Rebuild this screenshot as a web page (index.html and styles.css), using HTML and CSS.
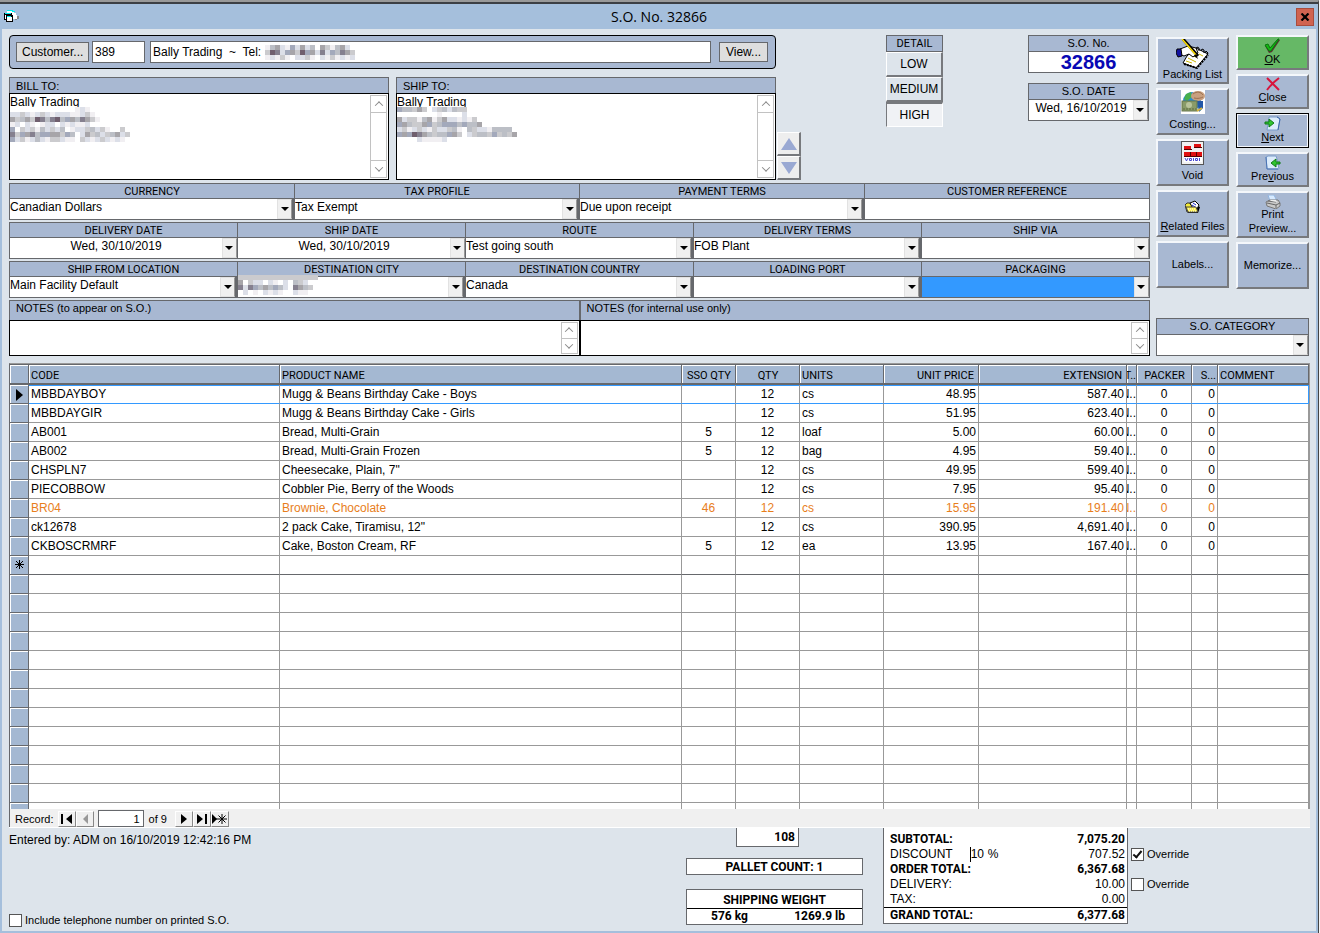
FILE: index.html
```html
<!DOCTYPE html>
<html lang="en">
<head>
<meta charset="utf-8">
<title>S.O. No. 32866</title>
<link rel="stylesheet" href="styles.css">
</head>
<body>
<div class="window">
  <header class="titlebar">
    <svg class="app-icon" width="16" height="14" viewBox="0 0 16 14" shape-rendering="crispEdges">
      <path d="M3 1h7v2h2v2h1v4h-4V5H5V3H3z" fill="#fff"/><path d="M3 0h6v1H3zM8 1h3v1H8z" fill="#0ee"/>
      <path d="M13 6h2v3h-2zM11 9h2v1h-2z" fill="#888"/>
      <path d="M0 3h8v7H0z" fill="#000"/><path d="M1 5h6v4H1z" fill="#fff"/>
      <path d="M2 5h7v7H2z" fill="#000"/><path d="M3 7h5v4H3z" fill="#fff"/><path d="M1 3h6v1H1zM3 6h4v1H3z" fill="#0ee"/>
    </svg>
    <h1>S.O. No. 32866</h1>
    <button class="close-window" aria-label="Close window">
      <svg width="10" height="8" viewBox="0 0 10 8"><path d="M1.500 0.500L8.500 7.500M8.500 0.500L1.500 7.500" stroke="#000" stroke-width="2.200"/></svg>
    </button>
  </header>

  <main class="content">
    <section class="top">
      <div class="form">
        <div class="row-head">
          <div class="parties">
            <div class="customer-bar">
              <button class="flat">Customer...</button>
              <input class="cust-no" aria-label="Customer number" value="389">
              <div class="cust-name">
                <input aria-label="Customer name" value="Bally Trading  ~  Tel:">
                <svg class="mosaic mosaic-tel" data-rows="145216252405314520|387265386527264753|121310223102131212"></svg>
              </div>
              <button class="flat">View...</button>
            </div>
            <div class="addresses">
              <div class="address">
                <label for="bill">BILL TO:</label>
                <div class="area">
                  <textarea id="bill">Bally Trading</textarea>
                  <div class="scroll"><button class="su" aria-label="Scroll up"></button><span></span><button class="sd" aria-label="Scroll down"></button></div>
                  <svg class="mosaic mosaic-addr" data-rows="0000000000000121|22321232122211231|5345387478465475310|12021012202121120000000|60323142324012234231003|736574665536402534234523|62312421332110321232121"></svg>
                </div>
              </div>
              <div class="address">
                <label for="ship">SHIP TO:</label>
                <div class="area">
                  <textarea id="ship">Bally Trading</textarea>
                  <div class="scroll"><button class="su" aria-label="Scroll up"></button><span></span><button class="sd" aria-label="Scroll down"></button></div>
                  <svg class="mosaic mosaic-addr" data-rows="64435302342433|0000000010000200|523314513522121300|654335634666464450|23123213223410432214444|656875434465302344363435|00002111120000000000000"></svg>
                </div>
              </div>
              <div class="movers">
                <button aria-label="Previous address"><svg width="18" height="12" viewBox="0 0 18 12"><path d="M9 0l8 12H1z" fill="#9aa9d3"/></svg></button>
                <button aria-label="Next address"><svg width="18" height="12" viewBox="0 0 18 12"><path d="M9 12l8-12H1z" fill="#9aa9d3"/></svg></button>
              </div>
            </div>
          </div>
          <div class="detail">
            <div class="cap narrow">DETAIL</div>
            <button>LOW</button>
            <button>MEDIUM</button>
            <button class="pressed">HIGH</button>
          </div>
          <div class="order-id">
            <div class="box">
              <label class="cap" for="so-no">S.O. No.</label>
              <input id="so-no" class="so-no" value="32866">
            </div>
            <div class="box">
              <label class="cap" for="so-date">S.O. DATE</label>
              <div class="combo date"><select id="so-date"><option>Wed, 16/10/2019</option></select></div>
            </div>
          </div>
        </div>

        <div class="fields four">
          <div class="field"><label for="f1">CURRENCY</label><div class="combo"><select id="f1"><option>Canadian Dollars</option></select></div></div>
          <div class="field"><label for="f2">TAX PROFILE</label><div class="combo"><select id="f2"><option>Tax Exempt</option></select></div></div>
          <div class="field"><label for="f3">PAYMENT TERMS</label><div class="combo"><select id="f3"><option>Due upon receipt</option></select></div></div>
          <div class="field"><label for="f4">CUSTOMER REFERENCE</label><input id="f4"></div>
        </div>
        <div class="fields five">
          <div class="field"><label for="g1">DELIVERY DATE</label><div class="combo date"><select id="g1"><option>Wed, 30/10/2019</option></select></div></div>
          <div class="field"><label for="g2">SHIP DATE</label><div class="combo date"><select id="g2"><option>Wed, 30/10/2019</option></select></div></div>
          <div class="field"><label for="g3">ROUTE</label><div class="combo"><select id="g3"><option>Test going south</option></select></div></div>
          <div class="field"><label for="g4">DELIVERY TERMS</label><div class="combo"><select id="g4"><option>FOB Plant</option></select></div></div>
          <div class="field"><label for="g5">SHIP VIA</label><div class="combo date"><select id="g5"><option></option></select></div></div>
        </div>
        <div class="fields five">
          <div class="field"><label for="h1">SHIP FROM LOCATION</label><div class="combo"><select id="h1"><option>Main Facility Default</option></select></div></div>
          <div class="field"><label for="h2">DESTINATION CITY</label><div class="combo"><select id="h2"><option></option></select><svg class="mosaic mosaic-city" data-rows="3333333333333333|5032202102043200|7276454642075430|0201021210021100"></svg></div></div>
          <div class="field"><label for="h3">DESTINATION COUNTRY</label><div class="combo"><select id="h3"><option>Canada</option></select></div></div>
          <div class="field"><label for="h4">LOADING PORT</label><div class="combo"><select id="h4"><option></option></select></div></div>
          <div class="field"><label for="h5">PACKAGING</label><div class="combo date active"><select id="h5"><option></option></select></div></div>
        </div>
        <div class="notes">
          <div class="note">
            <label for="n1">NOTES (to appear on S.O.)</label>
            <div class="area"><textarea id="n1"></textarea><div class="scroll"><button class="su" aria-label="Scroll up"></button><button class="sd" aria-label="Scroll down"></button></div></div>
          </div>
          <div class="note">
            <label for="n2">NOTES (for internal use only)</label>
            <div class="area"><textarea id="n2"></textarea><div class="scroll"><button class="su" aria-label="Scroll up"></button><button class="sd" aria-label="Scroll down"></button></div></div>
          </div>
        </div>
      </div>

      <aside class="side">
        <div class="actions">
          <div class="col docs">
            <button class="act tall">
              <svg width="34" height="30" viewBox="0 0 34 30">
                <path d="M11 17l9-8 12 6-12 14-13-5z" fill="#fff" stroke="#000"/>
                <path d="M8 25l13 4 11-13" fill="none" stroke="#000" stroke-width="2" stroke-dasharray="2 1"/>
                <path d="M12 19l8 4M15 16l5 2M10 22l6 2M23 15l4 2" stroke="#c8b400"/>
                <path d="M20 10l1-2 2 1v3M25 12l1-2 2 1v3M29 14l1-2 2 2-1 2" fill="none" stroke="#000"/>
                <path d="M4 10l8-3 8 2 2 5-5 4-4-3-5 2-5-2z" fill="#fff" stroke="#000"/>
                <path d="M1 10h4l1 7-4 1-2-4z" fill="#1010a0" stroke="#000"/>
                <path d="M7 0l15 17" stroke="#000" stroke-width="3"/><path d="M6 0l14 16" stroke="#ffe000" stroke-width="1.500"/>
                <path d="M20 15l2 5-4-3z" fill="#000"/>
              </svg>
              <span>Packing List</span>
            </button>
            <button class="act tall">
              <svg width="24" height="24" viewBox="0 0 24 24">
                <rect width="24" height="24" fill="#fff"/><circle cx="11" cy="11" r="9" fill="#2a8bd0"/>
                <path d="M5 4l5-2 1 5-5 4-3-2zM17 14l4-2 1 5-3 4z" fill="#48b04c"/><path d="M16 11h6v7l-4 4z" fill="#2358a8"/>
                <ellipse cx="17" cy="6" rx="7" ry="5" fill="#c9a080"/><path d="M12 4c4-3 8-2 10 1M13 8c4 1 7 0 9-1" stroke="#9c7150" fill="none"/>
                <rect x="1" y="11" width="15" height="10" fill="#899b68" stroke="#66764c"/><circle cx="8" cy="15" r="3" fill="#b9c49b"/>
                <path d="M2 19h13" stroke="#5c693f" stroke-dasharray="2 1"/><path d="M16 21l5-3" stroke="#d6b33c" stroke-width="2"/>
              </svg>
              <span>Costing...</span>
            </button>
            <button class="act tall">
              <svg width="24" height="24" viewBox="0 0 24 24">
                <rect width="23" height="24" fill="#555"/><rect x="1" y="1" width="21" height="22" fill="#f1f1f1"/>
                <path d="M3 5h7v3H3zM13 3h7v3h-7zM3 11h18v4H3z" fill="#e01010"/><path d="M3 8.500h8M13 6.500h8M3 15.500h18M9.500 11v4M15.500 11v4" stroke="#500"/>
                <rect x="3" y="16" width="18" height="5" fill="#fff"/>
                <path d="M4 17l1.500 3L7 17M8.500 17.500h2v2h-2zM12.500 17v3M14.500 17.500h2v2h-2zM18.500 17v3" fill="none" stroke="#4848d0"/>
              </svg>
              <span>Void</span>
            </button>
            <button class="act tall">
              <svg width="16" height="15" viewBox="0 0 16 15">
                <path d="M1 6h12l2 1-2 6H3z" fill="#000"/><path d="M0 5l2-2h3l1 2h6v7H2z" fill="#f4ec3a" stroke="#333"/>
                <path d="M5 3l5-2 4 4-2 4-5-2z" fill="#fff" stroke="#000"/><path d="M8 3l3 2M7 5l3 2" stroke="#1525cc"/>
                <path d="M1 7h10l2 5H3z" fill="#fff14a" stroke="#444"/><path d="M3 9h8M4 11h7" stroke="#fff" stroke-dasharray="1 1"/>
              </svg>
              <span><u>R</u>elated Files</span>
            </button>
            <button class="act tall"><span>Labels...</span></button>
          </div>
          <div class="col">
            <button class="act ok">
              <svg width="17" height="15" viewBox="0 0 17 15"><path d="M1 8l3-1 2 3 8-9 2 1-8 12-3 1z" fill="#5b3030"/><path d="M1 7l3-1 2 4 8-9 1 0-8 12H5z" fill="#12b812" stroke="#08780e"/></svg>
              <span><u>O</u>K</span>
            </button>
            <button class="act">
              <svg width="14" height="14" viewBox="0 0 14 14"><path d="M1 1l12 12M13 1C9 4 4 9 1 13" stroke="#d8143c" stroke-width="2" fill="none"/></svg>
              <span><u>C</u>lose</span>
            </button>
            <button class="act default">
              <svg width="17" height="15" viewBox="0 0 17 15"><path d="M5 1h9l2 2-2 11H3l1-6z" fill="#dcecfb" stroke="#7a9ccb"/><path d="M13 1l3 2-2 11" fill="none" stroke="#3c66aa"/><path d="M1 6h4V3l5 4-5 4V8H1z" fill="#2fc42f" stroke="#117a18"/></svg>
              <span><u>N</u>ext</span>
            </button>
            <button class="act">
              <svg width="17" height="15" viewBox="0 0 17 15"><path d="M2 2l2-1h8l1 3 2 10H3z" fill="#dcecfb" stroke="#7a9ccb"/><path d="M2 2l1 12h11" fill="none" stroke="#4a73b4"/><path d="M16 7h-4V4L7 8l5 4V9h4z" fill="#2fc42f" stroke="#117a18"/></svg>
              <span>Pre<u>v</u>ious</span>
            </button>
            <button class="act tall print">
              <svg width="16" height="14" viewBox="0 0 16 14"><path d="M3 0h6l3 6H5z" fill="#d7eaff" stroke="#90b4e0"/><path d="M1 7l4-2h8l2 3v3l-4 3-9-3z" fill="#c9c9c9" stroke="#777"/><path d="M2 8l9 2 4-2M11 10v3M3 6l8 1" stroke="#666" fill="none"/><path d="M5 5h6l1 2-6-1z" fill="#eee"/></svg>
              <span>Print<br>Preview...</span>
            </button>
            <button class="act tall"><span>Memorize...</span></button>
          </div>
        </div>
        <div class="box category">
          <label class="cap" for="cat">S.O. CATEGORY</label>
          <div class="combo date"><select id="cat"><option></option></select></div>
        </div>
      </aside>
    </section>

    <section class="grid">
      <div class="sheet">
        <table>
          <colgroup><col class="w-sel"><col class="w-code"><col><col class="w-sso"><col class="w-qty"><col class="w-units"><col class="w-price"><col class="w-ext"><col class="w-t"><col class="w-packer"><col class="w-s"><col class="w-comment"></colgroup>
          <thead>
            <tr><th></th><th>CODE</th><th>PRODUCT NAME</th><th class="c">SSO QTY</th><th class="c">QTY</th><th>UNITS</th><th class="r">UNIT PRICE</th><th class="r">EXTENSION</th><th class="t"><span>T..</span></th><th class="c">PACKER</th><th class="s">S...</th><th>COMMENT</th></tr>
          </thead>
          <tbody id="lines">
            <tr class="current"><th><svg width="7" height="12" viewBox="0 0 7 12"><path d="M0 0l7 6-7 6z"/></svg></th><td>MBBDAYBOY</td><td>Mugg &amp; Beans Birthday Cake - Boys</td><td class="c"></td><td class="c">12</td><td>cs</td><td class="r">48.95</td><td class="r">587.40</td><td class="t"><span>N..</span></td><td class="c">0</td><td class="r">0</td><td></td></tr>
            <tr><th></th><td>MBBDAYGIR</td><td>Mugg &amp; Beans Birthday Cake - Girls</td><td class="c"></td><td class="c">12</td><td>cs</td><td class="r">51.95</td><td class="r">623.40</td><td class="t"><span>N..</span></td><td class="c">0</td><td class="r">0</td><td></td></tr>
            <tr><th></th><td>AB001</td><td>Bread, Multi-Grain</td><td class="c">5</td><td class="c">12</td><td>loaf</td><td class="r">5.00</td><td class="r">60.00</td><td class="t"><span>N..</span></td><td class="c">0</td><td class="r">0</td><td></td></tr>
            <tr><th></th><td>AB002</td><td>Bread, Multi-Grain Frozen</td><td class="c">5</td><td class="c">12</td><td>bag</td><td class="r">4.95</td><td class="r">59.40</td><td class="t"><span>N..</span></td><td class="c">0</td><td class="r">0</td><td></td></tr>
            <tr><th></th><td>CHSPLN7</td><td>Cheesecake, Plain, 7"</td><td class="c"></td><td class="c">12</td><td>cs</td><td class="r">49.95</td><td class="r">599.40</td><td class="t"><span>N..</span></td><td class="c">0</td><td class="r">0</td><td></td></tr>
            <tr><th></th><td>PIECOBBOW</td><td>Cobbler Pie, Berry of the Woods</td><td class="c"></td><td class="c">12</td><td>cs</td><td class="r">7.95</td><td class="r">95.40</td><td class="t"><span>N..</span></td><td class="c">0</td><td class="r">0</td><td></td></tr>
            <tr class="flag"><th></th><td>BR04</td><td>Brownie, Chocolate</td><td class="c">46</td><td class="c">12</td><td>cs</td><td class="r">15.95</td><td class="r">191.40</td><td class="t"><span>N..</span></td><td class="c">0</td><td class="r">0</td><td></td></tr>
            <tr><th></th><td>ck12678</td><td>2 pack Cake, Tiramisu, 12"</td><td class="c"></td><td class="c">12</td><td>cs</td><td class="r">390.95</td><td class="r">4,691.40</td><td class="t"><span>N..</span></td><td class="c">0</td><td class="r">0</td><td></td></tr>
            <tr><th></th><td>CKBOSCRMRF</td><td>Cake, Boston Cream, RF</td><td class="c">5</td><td class="c">12</td><td>ea</td><td class="r">13.95</td><td class="r">167.40</td><td class="t"><span>N..</span></td><td class="c">0</td><td class="r">0</td><td></td></tr>
            <tr class="new"><th><svg width="9" height="9" viewBox="0 0 9 9"><path d="M4.500 0v9M0 4.500h9M1 1l7 7M8 1L1 8" stroke="#000"/></svg></th><td></td><td></td><td></td><td></td><td></td><td></td><td></td><td></td><td></td><td></td><td></td></tr>
          </tbody>
        </table>
      </div>
      <nav class="records">
        <label for="rec">Record:</label>
        <div class="navs">
          <button aria-label="First"><svg width="12" height="10" viewBox="0 0 12 10"><path d="M0 0h2v10H0zM11 0v10L5 5z"/></svg></button>
          <button aria-label="Previous record"><svg width="12" height="10" viewBox="0 0 12 10"><path d="M9 0v10L4 5z" fill="#999"/></svg></button>
        </div>
        <input id="rec" value="1">
        <span>of 9</span>
        <div class="navs next">
          <button aria-label="Next record"><svg width="12" height="10" viewBox="0 0 12 10"><path d="M3 0l6 5-6 5z"/></svg></button>
          <button aria-label="Last"><svg width="12" height="10" viewBox="0 0 12 10"><path d="M1 0l6 5-6 5zM9 0h2v10H9z"/></svg></button>
          <button aria-label="New record"><svg width="15" height="10" viewBox="0 0 15 10"><path d="M0 0l5 5-5 5z"/><path d="M4 5h11M10 0v10M6.500 1.500l7 7M13.500 1.500l-7 7" stroke="#000"/></svg></button>
        </div>
      </nav>
    </section>

    <footer class="footer">
      <div class="foot-left">
        <p>Entered by: ADM on 16/10/2019 12:42:16 PM</p>
        <label class="check"><input type="checkbox">Include telephone number on printed S.O.</label>
      </div>
      <div class="foot-mid">
        <output class="units-total">108</output>
        <div class="pallets">PALLET COUNT: 1</div>
        <div class="weight"><div>SHIPPING WEIGHT</div><div class="weights"><span>576 kg</span><span>1269.9 lb</span></div></div>
      </div>
      <table class="totals">
        <tr><th class="b">SUBTOTAL:</th><td class="b">7,075.20</td></tr>
        <tr><th><label for="disc">DISCOUNT</label><span class="pct"><input id="disc" value="10">%</span></th><td>707.52</td></tr>
        <tr><th class="b">ORDER TOTAL:</th><td class="b">6,367.68</td></tr>
        <tr><th>DELIVERY:</th><td>10.00</td></tr>
        <tr><th>TAX:</th><td>0.00</td></tr>
        <tr class="grand"><th class="b">GRAND TOTAL:</th><td class="b">6,377.68</td></tr>
      </table>
      <div class="overrides">
        <label class="check"><input type="checkbox" checked>Override</label>
        <label class="check"><input type="checkbox">Override</label>
      </div>
    </footer>
  </main>
</div>
<script src="app.js"></script>
</body>
</html>
```

FILE: styles.css
```css
*, *::before, *::after { box-sizing: border-box; }
:root {
  --panel: #a8b8d2;
  --edge: #66686c;
  --bg: #dde4eb;
  --frame: #a5bfdc;
  --focus: #3399ff;
}
body { margin: 0; background: #f4f4f4; font: 12px "Liberation Sans", Arial, sans-serif; color: #000; }
button, input, select, textarea { font: inherit; color: inherit; margin: 0; padding: 0; border: 0; border-radius: 0; outline: 0; }
button { cursor: pointer; }
svg { display: block; flex: none; }
h1, p { margin: 0; font-weight: normal; }

.window {
  display: flex; flex-direction: column; height: 100vh; min-height: 760px; margin-right: 1px;
  border-top: 2px solid #999; border-right: 1px solid #444; background: var(--frame);
}
.titlebar { display: grid; grid-template-columns: 1fr auto 1fr; align-items: center; height: 27px; padding: 0 4px; border-top: 2px solid #3c3f44; }
.titlebar h1 { font: 14px "Open Sans", "Noto Sans", sans-serif; }
.close-window { justify-self: end; display: grid; place-items: center; width: 18px; height: 18px; background: #d06350; border: 1px solid #a94c3d; }
.content { flex: 1; min-height: 0; display: flex; flex-direction: column; margin: 0 2px 2px; padding: 6px 7px 0; background: var(--bg); }

.top { display: flex; gap: 6px; margin-bottom: 7px; }
.form { flex: 1; display: flex; flex-direction: column; gap: 2px; }
.row-head { display: flex; margin-bottom: 1px; padding-right: 1px; }
.parties { width: 792px; display: flex; flex-direction: column; gap: 8px; }
.customer-bar { display: flex; align-items: center; height: 34px; margin-right: 25px; padding: 0 7px 0 6px; border: 1px solid #000; border-radius: 4px; background: var(--panel); }
.flat { height: 20px; padding: 0 5px; border: 1px solid var(--edge); background: #dedede; }
.flat:first-child { width: 73px; }
.flat:last-child { width: 49px; }
.customer-bar input { height: 22px; padding: 0 2px; border: 1px solid var(--edge); background: #fff; white-space: pre; }
.customer-bar .cust-no { width: 53px; margin: 0 5px 0 3px; }
.cust-name { position: relative; flex: 1; margin-right: 8px; }
.cust-name input { width: 100%; }
.mosaic { position: absolute; pointer-events: none; }
.mosaic-tel { left: 115px; top: 4px; }
.mosaic-addr { left: 0; top: 13px; }
.mosaic-city { left: 0; top: -2px; }

.addresses { display: flex; }
.address { width: 380px; height: 103px; display: flex; flex-direction: column; }
.address + .address { margin-left: 7px; }
.address label { height: 16px; padding: 1px 6px; font-size: 11px; line-height: 14px; background: var(--panel); border: 1px solid var(--edge); border-bottom: 0; }
.area { position: relative; flex: 1; display: flex; padding: 1px 1px 1px 0; border: 1px solid #000; background: #fff; }
.area textarea { flex: 1; resize: none; background: none; line-height: 15px; }
.scroll { width: 17px; display: flex; flex-direction: column; border: 1px solid #c2c2c2; }
.scroll span { flex: 1; border: solid #c2c2c2; border-width: 1px 0; }
.scroll button { display: grid; place-items: center; flex: 0 0 16px; background: #fff; }
.scroll button::before { content: ""; width: 6px; height: 6px; border: solid #888; border-width: 1px 0 0 1px; transform: rotate(45deg) translate(1px, 1px); }
.scroll .sd::before { transform: rotate(225deg) translate(1px, 1px); }
.movers { display: flex; flex-direction: column; justify-content: flex-end; width: 25px; padding-left: 1px; }
.movers button, .detail button, .act {
  display: grid; place-items: center; border: solid; border-width: 1px 2px 2px 1px; border-color: #fff #77797d #77797d #fff;
}
.movers button { height: 24px; background: #eee; }

.detail { width: 57px; margin: 0 auto 0 85px; }
.cap { display: block; height: 16px; font-size: 11px; line-height: 15px; text-align: center; background: var(--panel); border-bottom: 1px solid var(--edge); }
.detail .cap { height: 17px; border: 1px solid var(--edge); }
.narrow, .field label { font-family: Roboto, "Liberation Sans", sans-serif; }
.detail button { width: 100%; height: 25px; background: var(--bg); }
.detail .pressed { background: #f0f2f5; border-width: 2px 1px 1px; border-color: #77797d #fff #fff #77797d; }
.order-id { width: 121px; display: flex; flex-direction: column; gap: 10px; }
.box { border: 1px solid var(--edge); background: #fff; }
.so-no { display: block; width: 100%; height: 20px; text-align: center; font-size: 20px; font-weight: bold; color: #0808b4; }

.fields { display: grid; border: solid var(--edge); border-width: 1px 0 1px 1px; }
.four { grid-template-columns: repeat(4, 1fr); }
.five { grid-template-columns: repeat(5, 1fr); }
.field { border-right: 1px solid var(--edge); background: #fff; }
.field label { display: block; height: 15px; font-size: 11px; line-height: 16px; text-align: center; background: var(--panel); border-bottom: 1px solid var(--edge); }
.field > input { display: block; width: 100%; height: 20px; }
.combo { position: relative; display: flex; height: 20px; background: #fff; }
.combo select { appearance: none; flex: 1; min-width: 0; padding: 0 15px 4px 0; background: none; }
.combo::after { content: ""; position: absolute; right: 2px; top: 0; width: 15px; height: 20px; background: #f0f0f0; border: 1px solid #e2e2e2; border-right-color: #999; box-shadow: 2px 0 var(--edge); pointer-events: none; }
.combo::before { content: ""; position: absolute; z-index: 1; right: 5px; top: 8px; border: solid transparent; border-width: 4px 4px 0; border-top-color: #000; pointer-events: none; }
.combo.date::after { right: 0; box-shadow: none; }
.combo.date::before { right: 4px; }
.combo.date select { text-align: center; text-align-last: center; }
.combo.active { background: var(--focus); }

.notes { display: grid; grid-template-columns: 1fr 1fr; }
.note { display: flex; flex-direction: column; height: 56px; }
.note label { height: 20px; padding: 0 6px; font-size: 11px; line-height: 15px; background: var(--panel); border: 1px solid var(--edge); border-bottom: 0; }
.note .scroll button { flex: 1; }
.note .scroll .sd { border-top: 1px solid #c2c2c2; }

.side { width: 153px; display: flex; flex-direction: column; justify-content: space-between; }
.actions { display: grid; grid-template-columns: 1fr 1fr; gap: 7px; }
.col { display: flex; flex-direction: column; gap: 4px; }
.docs { padding-top: 2px; }
.act { display: flex; flex-direction: column; align-items: center; justify-content: center; height: 35px; font-size: 11px; line-height: 13px; background: var(--panel); border-width: 2px; border-color: #f4f7fb #77797d #77797d #f4f7fb; white-space: nowrap; }
.act.tall { height: 47px; }
.act.ok { background: #66b866; }
.act.default { box-shadow: inset 0 0 0 1px #f4f7fb; border-color: #000; border-width: 1px; }
.act:not(.tall) { padding-bottom: 2px; }
.docs .act svg + span { margin-top: auto; line-height: 11px; }
.docs .act:has(svg) { justify-content: flex-start; padding-bottom: 3px; }
.docs .act:nth-child(4) svg { margin-top: 8px; }
.print { line-height: 14px; }
.print svg { margin-bottom: -2px; }

.grid { flex: 1; min-height: 0; display: flex; flex-direction: column; margin-right: -1px; border-bottom: 1px solid #fff; }
.sheet { flex: 1 1 0; min-height: 0; overflow: hidden; background: #fff; border: solid #999; border-width: 1px 1px 0; border-left-color: var(--edge); }
.sheet table { width: 100%; table-layout: fixed; border-spacing: 0; }
.w-sel { width: 19px; } .w-code { width: 251px; } .w-sso { width: 54px; } .w-qty { width: 64px; } .w-units { width: 84px; }
.w-price { width: 95px; } .w-ext { width: 148px; } .w-t { width: 10px; } .w-packer { width: 55px; } .w-s { width: 26px; } .w-comment { width: 91px; }
.sheet th, .sheet td { height: 19px; padding: 0 2px; font-weight: normal; text-align: left; white-space: nowrap; overflow: hidden; line-height: 18px; vertical-align: top; border: solid #999; border-width: 0 1px 1px 0; }
.sheet thead th { height: 21px; padding: 3px 1px 0 2px; font: 11px/15px Roboto, "Liberation Sans", sans-serif; background: #a4b8d2; border-color: var(--edge); border-width: 1px 1px 2px 0; box-shadow: inset 1px 1px #fff; }
.sheet tbody th { padding: 0; background: #a4b8d2; border-color: var(--edge); box-shadow: inset 1px 1px #fff; }
.sheet tbody th svg { margin: 4px auto 0; }
.sheet .c { text-align: center; }
.sheet .r { text-align: right; }
.sheet thead .r { padding-right: 4px; }
.sheet thead .s { text-align: right; }
.sheet td.t { padding: 0; }
.sheet thead .t { padding: 3px 0 0; }
.t span { display: flex; justify-content: flex-end; overflow: hidden; }
.sheet .current td { border-bottom-color: var(--focus); box-shadow: inset 0 1px var(--focus); }
.sheet .current td:last-child { border-right-color: var(--focus); }
.sheet .new td { border-bottom-color: var(--edge); }
.flag { color: #e87e1c; }
.records { display: flex; align-items: center; height: 18px; padding: 1px 0 0 5px; font-size: 11px; background: #f0f0f0; border-left: 1px solid var(--edge); }
.navs { display: flex; margin-left: 4px; }
.navs button { display: grid; place-items: center; width: 18px; height: 16px; background: #f0f0f0; border: solid; border-width: 1px; border-color: #fff #888 #888 #fff; }
.records input { width: 46px; height: 17px; margin: 0 5px 0 4px; padding-right: 3px; text-align: right; background: #fff; border: 1px solid var(--edge); }
.navs.next { margin-left: 8px; }

.footer { display: flex; height: 103px; }
.foot-left { flex: 1; display: flex; flex-direction: column; justify-content: space-between; padding: 5px 0 4px; }
.check { display: flex; align-items: center; gap: 3px; font-size: 11px; height: 14px; }
.check input { appearance: none; width: 13px; height: 13px; background: #fff; border: 1px solid #555; }
.check input:checked { display: grid; place-items: center; }
.check input:checked::before { content: ""; width: 5px; height: 9px; margin-bottom: 2px; border: solid #111; border-width: 0 2px 2px 0; transform: rotate(40deg); }
.foot-mid { width: 177px; display: flex; flex-direction: column; font: bold 12px/15px Roboto, "Liberation Sans", sans-serif; text-align: center; }
.units-total { width: 63px; height: 19px; margin-left: 50px; padding: 2px 3px; text-align: right; background: #fff; border: 1px solid var(--edge); border-top: 0; }
.pallets { height: 17px; margin: 11px 0 14px; line-height: 16px; background: #fff; border: 1px solid var(--edge); }
.weight { padding-top: 2px; line-height: 16px; background: #fff; border: 1px solid var(--edge); }
.weights { display: flex; justify-content: space-between; padding: 0 17px 0 24px; line-height: 15px; border-top: 1px solid #000; }
.totals { width: 245px; height: 96px; margin-left: 20px; padding-top: 4px; border-spacing: 0; background: #fff; border: 1px solid var(--edge); border-top: 0; }
.totals th, .totals td { height: 15px; padding: 0 2px 0 6px; line-height: 15px; font-weight: normal; text-align: left; }
.totals td { text-align: right; }
.totals .b { font-family: Roboto, "Liberation Sans", sans-serif; font-weight: bold; }
.grand th, .grand td { border-top: 1px solid #000; }
.pct { display: inline-flex; margin-left: 17px; }
.pct input { width: 18px; height: 15px; border-left: 1px solid #000; background: none; }
.overrides { width: 181px; display: flex; flex-direction: column; gap: 16px; padding: 19px 0 0 3px; }
```

FILE: app.js
```js
// Redaction mosaics: each digit is one cell's darkness.
const shades = ["", "#f1eff2", "#dcdfe8", "#cbcbce", "#bcbfc6", "#a7a5a9", "#a3a9bb", "#85808f", "#705f6e"];
const cell = 5;
for (const svg of document.querySelectorAll(".mosaic")) {
  const rows = svg.dataset.rows.split("|");
  svg.setAttribute("width", Math.max(...rows.map(r => r.length)) * cell);
  svg.setAttribute("height", rows.length * cell);
  rows.forEach((row, y) => [...row].forEach((level, x) => {
    const rect = document.createElementNS("http://www.w3.org/2000/svg", "rect");
    rect.setAttribute("x", x * cell);
    rect.setAttribute("y", y * cell);
    rect.setAttribute("width", cell);
    rect.setAttribute("height", cell);
    rect.setAttribute("fill", shades[level] || "#fff");
    svg.append(rect);
  }));
}

// Blank rows fill the sheet below the last record.
const lines = document.getElementById("lines");
for (let i = 0; i < 13; i++) {
  const tr = document.createElement("tr");
  tr.append(document.createElement("th"));
  for (let c = 0; c < 11; c++) tr.append(document.createElement("td"));
  lines.append(tr);
}
```
